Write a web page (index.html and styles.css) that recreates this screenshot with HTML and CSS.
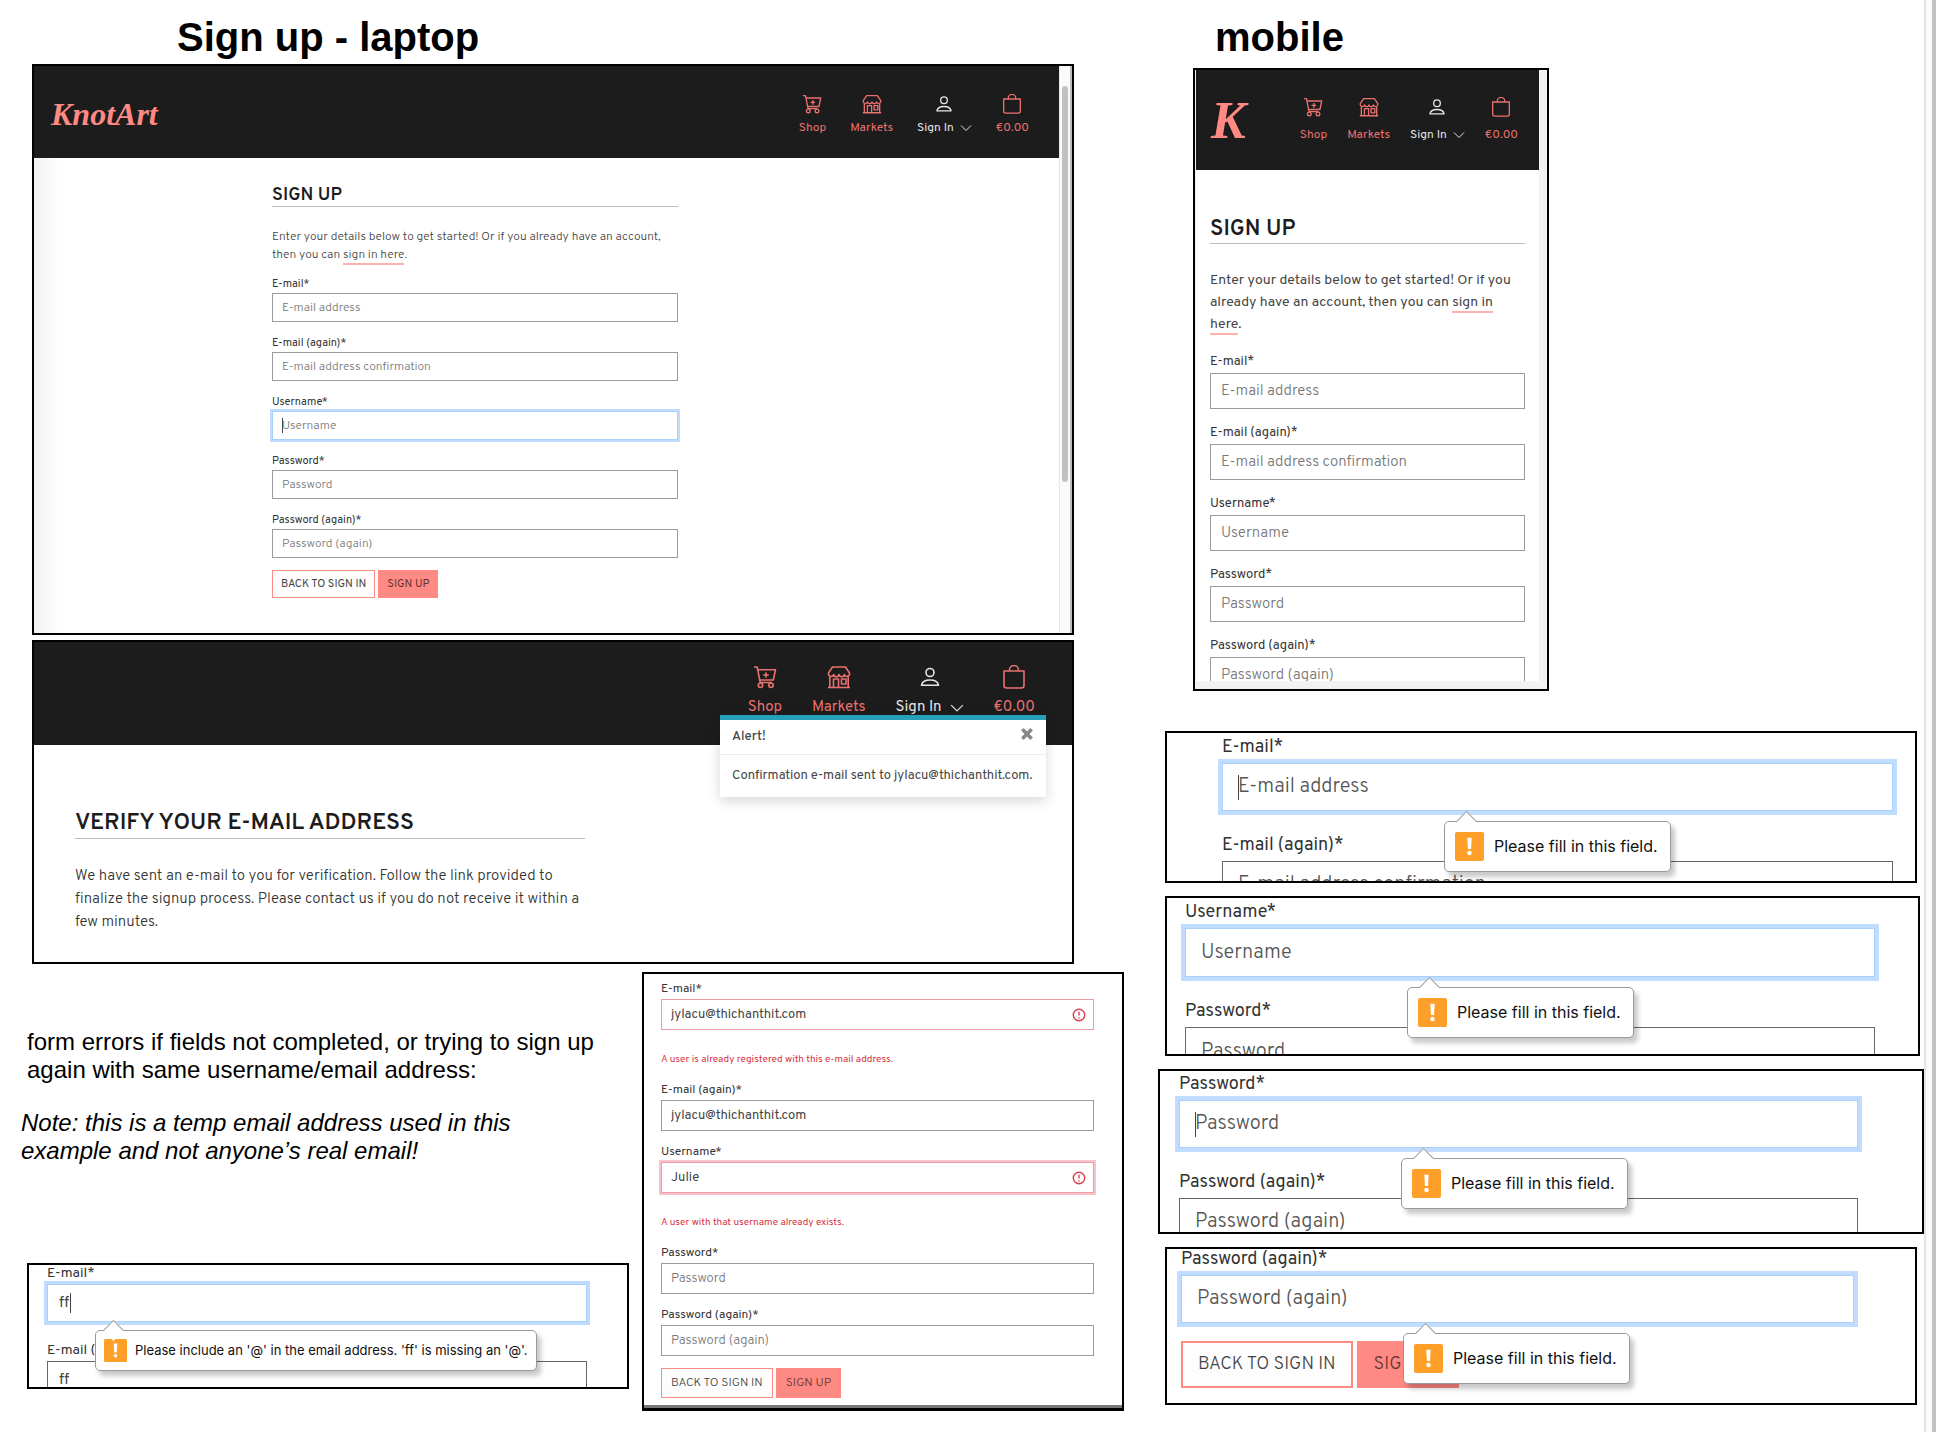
FILE: index.html
```html
<!DOCTYPE html>
<html lang="en">
<head>
<meta charset="utf-8">
<title>KnotArt sign up</title>
<meta name="viewport" content="width=device-width, initial-scale=1">
<link rel="stylesheet" href="styles.css">
</head>
<body>
<svg class="sprite" aria-hidden="true">
  <symbol id="i-cart" viewBox="0 0 24 24">
    <path d="M1 2h3.200l3 15.500M5 4.800h17.500l-2.200 10.200H6.800M7.500 17.500h11M13 7.200v5.600M10.200 10h5.600"/>
    <circle cx="7.500" cy="20.300" r="2.200"/><circle cx="18" cy="20.300" r="2.200"/>
  </symbol>
  <symbol id="i-market" viewBox="0 0 24 24">
    <path d="M5.500 2h13l4 6v1.500a2.700 2.700 0 0 1-5.200 0 2.700 2.700 0 0 1-5.300 0 2.700 2.700 0 0 1-5.300 0 2.700 2.700 0 0 1-5.200 0V8zM2.800 12v10.300M21.200 12v10.300M1 22.500h22M6.500 22.500v-8.500h5v8.500M14.500 14h4.500v5h-4.500z"/>
  </symbol>
  <symbol id="i-user" viewBox="0 0 24 24">
    <circle cx="12" cy="7.500" r="4"/>
    <path d="M12 15c5.500 0 8 2.200 8.500 5.300H3.500C4 17.200 6.500 15 12 15z"/>
  </symbol>
  <symbol id="i-bag" viewBox="0 0 24 24">
    <path d="M2 6h20v14.500a2.500 2.500 0 0 1-2.500 2.500h-15A2.500 2.500 0 0 1 2 20.500zM7.500 6V5a4.500 4.500 0 0 1 9 0v1"/>
  </symbol>
  <symbol id="i-chevron" viewBox="0 0 12 12"><path d="M1 3.500l5 5 5-5"/></symbol>
  <symbol id="i-alert" viewBox="0 0 14 14"><circle cx="7" cy="7" r="5.700"/><path d="M7 3.700v3.800M7 9.200v1.300"/></symbol>
  <symbol id="i-close" viewBox="0 0 12 12"><path d="M2 2l8 8M10 2l-8 8"/></symbol>
  <symbol id="i-bang" viewBox="0 0 30 30"><rect width="30" height="30" rx="2"/><path d="M12.700 6h4.600l-.7 11.500h-3.200z"/><circle cx="15" cy="21.800" r="2.300"/></symbol>
</svg>

<div class="page">
<main class="board">
  <section class="col col-laptop">
    <h1 class="heading">Sign up - laptop</h1>

    <article class="frame frame-signup">
      <div class="viewport">
        <header class="bar">
          <a class="logo" href="#">KnotArt</a>
          <nav class="nav">
            <a href="#"><svg><use href="#i-cart"/></svg><span>Shop</span></a>
            <a href="#"><svg><use href="#i-market"/></svg><span>Markets</span></a>
            <a class="active" href="#"><svg><use href="#i-user"/></svg><span>Sign In <svg class="chevron"><use href="#i-chevron"/></svg></span></a>
            <a href="#"><svg><use href="#i-bag"/></svg><span>€0.00</span></a>
          </nav>
        </header>
        <form class="form">
          <h2>SIGN UP</h2>
          <p>Enter your details below to get started! Or if you already have an account, then you can <a class="link" href="#">sign in here</a>.</p>
          <div class="field"><label for="a1">E-mail*</label><div class="control"><input id="a1" type="email" placeholder="E-mail address"></div></div>
          <div class="field"><label for="a2">E-mail (again)*</label><div class="control"><input id="a2" type="email" placeholder="E-mail address confirmation"></div></div>
          <div class="field"><label for="a3">Username*</label><div class="control focus"><input id="a3" type="text" placeholder="Username"><i class="caret"></i></div></div>
          <div class="field"><label for="a4">Password*</label><div class="control"><input id="a4" type="password" placeholder="Password"></div></div>
          <div class="field"><label for="a5">Password (again)*</label><div class="control"><input id="a5" type="password" placeholder="Password (again)"></div></div>
          <div class="actions"><button type="button" class="btn">BACK TO SIGN IN</button><button type="button" class="btn primary">SIGN UP</button></div>
        </form>
      </div>
      <div class="track"><div class="thumb"></div></div>
    </article>

    <article class="frame frame-verify">
      <header class="bar">
        <nav class="nav">
          <a href="#"><svg><use href="#i-cart"/></svg><span>Shop</span></a>
          <a href="#"><svg><use href="#i-market"/></svg><span>Markets</span></a>
          <a class="active" href="#"><svg><use href="#i-user"/></svg><span>Sign In <svg class="chevron"><use href="#i-chevron"/></svg></span></a>
          <a href="#"><svg><use href="#i-bag"/></svg><span>€0.00</span></a>
        </nav>
      </header>
      <div class="toast" role="alert">
        <div class="toast-head"><strong>Alert!</strong><button type="button" aria-label="Close"><svg><use href="#i-close"/></svg></button></div>
        <div class="toast-body">Confirmation e-mail sent to jylacu@thichanthit.com.</div>
      </div>
      <div class="message">
        <h2>VERIFY YOUR E-MAIL ADDRESS</h2>
        <p>We have sent an e-mail to you for verification. Follow the link provided to finalize the signup process. Please contact us if you do not receive it within a few minutes.</p>
      </div>
    </article>

    <div class="lower">
      <div class="notes">
        <p>form errors if fields not completed, or trying to sign up again with same username/email address:</p>
        <p class="aside">Note: this is a temp email address used in this example and not anyone’s real email!</p>
        <article class="frame crop crop-at">
          <div class="field"><label for="b1">E-mail*</label><div class="control focus"><input id="b1" type="text" value="ff"><i class="caret"></i>
            <div class="tip"><svg><use href="#i-bang"/></svg>Please include an '@' in the email address. 'ff' is missing an '@'.</div></div></div>
          <div class="field"><label for="b2">E-mail (again)*</label><div class="control"><input id="b2" type="text" value="ff"></div></div>
        </article>
      </div>

      <article class="frame frame-errors">
        <form class="form">
          <div class="field"><label for="c1">E-mail*</label><div class="control invalid"><input id="c1" type="email" value="jylacu@thichanthit.com"><svg><use href="#i-alert"/></svg></div></div>
          <p class="error">A user is already registered with this e-mail address.</p>
          <div class="field"><label for="c2">E-mail (again)*</label><div class="control"><input id="c2" type="email" value="jylacu@thichanthit.com"></div></div>
          <div class="field"><label for="c3">Username*</label><div class="control invalid focus"><input id="c3" type="text" value="Julie"><svg><use href="#i-alert"/></svg></div></div>
          <p class="error">A user with that username already exists.</p>
          <div class="field"><label for="c4">Password*</label><div class="control"><input id="c4" type="password" placeholder="Password"></div></div>
          <div class="field"><label for="c5">Password (again)*</label><div class="control"><input id="c5" type="password" placeholder="Password (again)"></div></div>
          <div class="actions"><button type="button" class="btn">BACK TO SIGN IN</button><button type="button" class="btn primary">SIGN UP</button></div>
        </form>
      </article>
    </div>
  </section>

  <section class="col col-mobile">
    <h1 class="heading">mobile</h1>

    <article class="frame frame-mobile">
      <div class="viewport">
        <header class="bar">
          <a class="logo" href="#">K</a>
          <nav class="nav">
            <a href="#"><svg><use href="#i-cart"/></svg><span>Shop</span></a>
            <a href="#"><svg><use href="#i-market"/></svg><span>Markets</span></a>
            <a class="active" href="#"><svg><use href="#i-user"/></svg><span>Sign In <svg class="chevron"><use href="#i-chevron"/></svg></span></a>
            <a href="#"><svg><use href="#i-bag"/></svg><span>€0.00</span></a>
          </nav>
        </header>
        <form class="form">
          <h2>SIGN UP</h2>
          <p>Enter your details below to get started! Or if you already have an account, then you can <a class="link" href="#">sign in<br>here</a>.</p>
          <div class="field"><label for="d1">E-mail*</label><div class="control"><input id="d1" type="email" placeholder="E-mail address"></div></div>
          <div class="field"><label for="d2">E-mail (again)*</label><div class="control"><input id="d2" type="email" placeholder="E-mail address confirmation"></div></div>
          <div class="field"><label for="d3">Username*</label><div class="control"><input id="d3" type="text" placeholder="Username"></div></div>
          <div class="field"><label for="d4">Password*</label><div class="control"><input id="d4" type="password" placeholder="Password"></div></div>
          <div class="field"><label for="d5">Password (again)*</label><div class="control"><input id="d5" type="password" placeholder="Password (again)"></div></div>
        </form>
      </div>
    </article>

    <div class="crops">
      <article class="frame crop crop-email">
        <div class="field"><label for="e1">E-mail*</label><div class="control focus"><input id="e1" type="email" placeholder="E-mail address"><i class="caret"></i>
          <div class="tip"><svg><use href="#i-bang"/></svg>Please fill in this field.</div></div></div>
        <div class="field"><label for="e2">E-mail (again)*</label><div class="control"><input id="e2" type="email" placeholder="E-mail address confirmation"></div></div>
      </article>
      <article class="frame crop crop-user">
        <div class="field"><label for="f1">Username*</label><div class="control focus"><input id="f1" type="text" placeholder="Username">
          <div class="tip"><svg><use href="#i-bang"/></svg>Please fill in this field.</div></div></div>
        <div class="field"><label for="f2">Password*</label><div class="control"><input id="f2" type="password" placeholder="Password"></div></div>
      </article>
      <article class="frame crop crop-pass">
        <div class="field"><label for="g1">Password*</label><div class="control focus"><input id="g1" type="password" placeholder="Password"><i class="caret"></i>
          <div class="tip"><svg><use href="#i-bang"/></svg>Please fill in this field.</div></div></div>
        <div class="field"><label for="g2">Password (again)*</label><div class="control"><input id="g2" type="password" placeholder="Password (again)"></div></div>
      </article>
      <article class="frame crop crop-again">
        <div class="field"><label for="h1">Password (again)*</label><div class="control focus"><input id="h1" type="password" placeholder="Password (again)">
          <div class="tip"><svg><use href="#i-bang"/></svg>Please fill in this field.</div></div></div>
        <div class="actions"><button type="button" class="btn">BACK TO SIGN IN</button><button type="button" class="btn primary">SIGN UP</button></div>
      </article>
    </div>
  </section>
</main>
<div class="page-track"></div>
</div>
</body>
</html>
```
FILE: styles.css
```css
* { box-sizing: border-box; }
body { margin: 0; background: #fff; color: #222; font-family: Overpass, Roboto, sans-serif; }
h1, h2, p { margin: 0; }
a { color: inherit; text-decoration: none; }
.sprite { position: absolute; width: 0; height: 0; }

/* Board */
.page { display: flex; min-height: 100vh; }
.board {
  flex: 1;
  display: grid;
  grid-template-columns: minmax(0, 1124fr) minmax(0, 766fr);
  gap: 34px;
  align-items: start;
  padding-top: 13px;
}
.page-track { width: 12px; background: #fafafa; border-left: 2px solid #e4e4e4; border-right: 4px solid #c1c1c1; }
.heading {
  font: bold 40px/48px "Liberation Sans", Arial, sans-serif;
  color: #000;
}
.col-laptop .heading { padding-left: 177px; }
.col-mobile .heading { padding-left: 57px; }
.frame { border: 2px solid #000; background: #fff; }

/* Shop header */
.bar { display: flex; align-items: flex-start; background: #1c1c1c; }
.logo { color: #ff8983; font: italic bold 32px/40px "Liberation Serif", serif; }
.nav { display: flex; margin-left: auto; gap: 24px; color: #e8716f; }
.nav a { display: flex; flex-direction: column; align-items: center; }
.nav span { display: flex; align-items: center; }
.nav .active { color: #e6e6e6; }
.nav svg { fill: none; stroke: currentColor; stroke-width: 1.6; stroke-linejoin: round; width: 20px; height: 20px; }
.nav .chevron { width: 12px; height: 12px; margin-left: 6px; stroke-width: 1; }

/* Forms */
h2 { color: #1c1c1c; font-weight: 600; border-bottom: 1px solid #bbb; }
.form p { color: #444; font-weight: 300; }
.link { border-bottom: 2px solid #ffb1ae; }
.field label { display: block; color: #333; }
.control { position: relative; height: var(--control); }
.control input {
  display: block; width: 100%; height: 100%;
  padding: 0 9px;
  border: 1px solid #9b9b9b;
  border-radius: 0; outline: 0;
  background: #fff; color: #444;
  font: inherit;
}
.control input::placeholder { color: #777; opacity: 1; font-weight: 300; }
.focus input { border-color: #a9cffb; box-shadow: 0 0 0 2px #c0dcff; }
.invalid input { border-color: #f09aa3; }
.invalid.focus input { box-shadow: 0 0 0 2px #f6c4ca; }
.invalid svg { position: absolute; right: 8px; top: 50%; width: 14px; height: 14px; margin-top: -7px; fill: none; stroke: #dc3f51; stroke-width: 1.4; }
.caret { position: absolute; left: 10px; top: 7px; bottom: 7px; width: 1px; background: #444; }
.actions { display: flex; }
.btn { border: 1px solid #ff8983; background: #fdfdfd; color: #444; font: inherit; border-radius: 0; }
.btn.primary { background: #ff8983; color: #5d3534; }

/* Laptop sign-up */
.frame-signup { display: flex; height: 571px; margin: 3px 50px 0 32px; }
.frame-signup .viewport { flex: 1; background: linear-gradient(90deg, #f2f2f2, #fff 26px); }
.frame-signup .bar { height: 92px; padding: 28px 30px 0 17px; }
.frame-signup .nav { gap: 24px; font-size: 12px; line-height: 18px; }
.frame-signup .nav a { gap: 5px; }
.track { width: 13px; padding: 20px 4px 0 2px; background: #fafafa; border-left: 1px solid #e8e8e8; border-right: 2px solid #bbb; }
.thumb { width: 6px; height: 396px; border-radius: 3px; background: #c1c1c1; }
.frame-signup .form { --control: 29px; width: 406px; margin: 0 auto 0 238px; padding-top: 25px; font-size: 12px; }
.frame-signup h2 { padding-top: 2px; font-size: 18px; line-height: 21px; }
.frame-signup p { margin: 21px 0 11px; line-height: 18px; }
.frame-signup .field { margin-bottom: 12px; }
.frame-signup label { font-size: 11px; line-height: 18px; }
.frame-signup .actions { gap: 3px; }
.frame-signup .btn { height: 28px; padding: 0 8px; font-size: 11px; }

/* Verify page */
.frame-verify { position: relative; height: 324px; margin: 5px 50px 0 32px; }
.frame-verify .bar { height: 103px; padding: 23px 37px 0; }
.frame-verify .nav { gap: 30px; font-size: 15px; line-height: 22px; }
.frame-verify .nav a { gap: 8px; }
.frame-verify .nav svg { width: 24px; height: 24px; }
.frame-verify .nav .chevron { width: 14px; height: 14px; margin-left: 8px; }
.toast {
  position: absolute; right: 26px; top: 73px; width: 326px;
  background: #fff; border-top: 5px solid #26a0b8; box-shadow: 0 4px 12px rgba(0, 0, 0, .16);
  color: #444; font-size: 13px; line-height: 20px;
}
.toast-head { display: flex; justify-content: space-between; padding: 7px 12px 7px; border-bottom: 1px solid #eee; }
.toast-head strong { font-weight: 500; }
.toast-head button { display: flex; padding: 0; border: 0; background: none; }
.toast-head svg { width: 14px; height: 14px; stroke: #888; stroke-width: 3; }
.toast-body { padding: 11px 0 11px 12px; white-space: nowrap; }
.message { width: 510px; margin: 60px 0 0 41px; }
.message h2 { padding-top: 4px; font-size: 23px; line-height: 29px; }
.message p { margin-top: 26px; color: #333; font-size: 15px; font-weight: 300; line-height: 23px; }

/* Notes and form errors */
.lower { display: grid; grid-template-columns: minmax(0, 602fr) minmax(0, 482fr); gap: 13px; margin-top: 8px; padding-left: 27px; }
.notes { padding-top: 56px; font: 24px/28px "Liberation Sans", Arial, sans-serif; color: #000; }
.notes .aside { margin: 25px 0 0 -6px; max-width: 510px; font-style: italic; }
.frame-errors { border-bottom-width: 3px; box-shadow: inset 0 -3px #777; }
.frame-errors .form { --control: 31px; padding: 6px 28px 10px 17px; font-size: 13px; }
.frame-errors label { font-size: 12px; line-height: 19px; }
.frame-errors .field { margin-bottom: 12px; }
.frame-errors .error { color: #d83342; font-size: 10px; font-weight: 400; line-height: 18px; margin: 21px 0 12px; }
.frame-errors .actions { gap: 3px; }
.frame-errors .btn { height: 30px; padding: 0 9px; font-size: 12px; font-weight: 300; }

/* Mobile sign-up */
.frame-mobile { width: 356px; height: 623px; margin: 7px 0 0 35px; padding: 0 8px 8px 1px; background: #f1f3f2; }
.frame-mobile .viewport { height: 100%; overflow: hidden; background: #fff; }
.frame-mobile .bar { height: 100px; padding: 27px 21px 0 15px; }
.frame-mobile .logo { font-size: 52px; line-height: 48px; }
.frame-mobile .nav { gap: 20px; font-size: 12px; line-height: 18px; }
.frame-mobile .nav a { gap: 9px; }
.frame-mobile .form { --control: 36px; padding: 44px 14px 0; font-size: 15px; }
.frame-mobile h2 { padding-top: 3px; font-size: 22px; line-height: 26px; }
.frame-mobile p { margin: 26px 0 16px; font-size: 14px; font-weight: 400; line-height: 22px; }
.frame-mobile label { font-size: 13px; line-height: 21px; }
.frame-mobile .field { margin-bottom: 14px; }
.frame-mobile .control input { padding: 0 10px; }

/* Cropped field close-ups */
.crops { display: flex; flex-direction: column; gap: 13px; margin-top: 40px; }
.crop { --control: 48px; overflow: hidden; font-family: Overpass, Roboto, sans-serif; font-size: 20px; font-weight: 300; }
.crop label { font-size: 18px; font-weight: 400; line-height: 22px; }
.crop .control { margin: 4px 0 24px; }
.crop input { padding: 0 15px; border-color: #666; }
.crop input::placeholder { color: #555; }
.crop .focus input { border-color: #a9cffb; box-shadow: 0 0 0 4px #c0dcff; }
.crop .caret { left: 16px; top: 12px; bottom: 11px; }
.crop .actions { gap: 4px; margin-top: -6px; }
.crop .btn { height: 47px; padding: 0 15px; border-width: 2px; font-size: 18px; }
.crop-email { height: 152px; margin: 0 7px; padding: 4px 22px 0 55px; }
.crop-user { --control: 49px; height: 160px; margin: 0 4px 0 7px; padding: 4px 43px 0 18px; }
.crop-pass { height: 165px; padding: 3px 64px 0 19px; }
.crop-again { height: 158px; margin: 0 7px; padding: 0 61px 0 14px; }

.tip {
  position: absolute; z-index: 1; top: calc(100% + 10px); left: 222px;
  display: flex; align-items: center; gap: 10px;
  padding: 10px 12px 10px 10px;
  border: 1px solid #999; border-radius: 5px; background: #fff;
  box-shadow: 4px 5px 5px rgba(0, 0, 0, .22);
  color: #111; font: 16px/29px Inter, sans-serif; white-space: nowrap;
}
.tip::before {
  content: ""; position: absolute; left: 14px; top: -8px; width: 14px; height: 14px;
  background: #fff; border: 1px solid #999; border-right: 0; border-bottom: 0; transform: rotate(45deg);
}
.tip svg { flex: none; width: 29px; height: 29px; fill: #fff; }
#i-bang rect { fill: #fd9f28; }

.crop-at { --control: 38px; height: 126px; margin-top: 98px; padding: 0 40px 0 18px; font-size: 15px; font-weight: 400; }
.crop-at label { font-size: 14px; line-height: 17px; }
.crop-at .control { margin: 2px 0 20px; }
.crop-at .control input { padding: 0 11px; }
.crop-at .focus input { box-shadow: 0 0 0 3px #c0dcff; }
.crop-at .caret { left: 23px; top: 9px; bottom: 9px; }
.crop-at .tip { left: 48px; top: calc(100% + 8px); gap: 8px; padding: 8px; font-size: 13px; line-height: 23px; }
.crop-at .tip svg { width: 23px; height: 23px; }
.crop-at .tip::before { left: 10px; }
```
